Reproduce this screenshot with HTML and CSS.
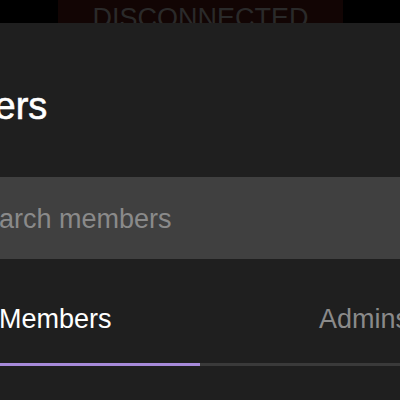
FILE: index.html
```html
<!DOCTYPE html>
<html lang="en">
<head>
<meta charset="utf-8">
<title>Members</title>
<link rel="stylesheet" href="styles.css">
</head>
<body>
  <div class="topbar">
    <div class="banner">DISCONNECTED</div>
  </div>
  <div class="sheet">
    <h1 class="title">Members</h1>
    <div class="search">
      <span class="placeholder">Search members</span>
    </div>
    <div class="tabs">
      <span class="tab tab-active">Members</span>
      <span class="tab">Admins</span>
    </div>
    <div class="track">
      <div class="indicator"></div>
    </div>
  </div>
</body>
</html>
```
FILE: styles.css
```css
html, body {
  margin: 0;
  padding: 0;
}
body {
  width: 400px;
  height: 400px;
  overflow: hidden;
  background: #000;
  font-family: "Liberation Sans", Arial, sans-serif;
}
.topbar {
  height: 23px;
  display: flex;
  justify-content: center;
  overflow: hidden;
  background: #000;
}
.banner {
  width: 285px;
  margin-left: 1px;
  background: #120504;
  color: #2a2a2a;
  font-size: 27px;
  line-height: 31px;
  padding-top: 3px;
  text-align: center;
  white-space: nowrap;
}
.sheet {
  height: 377px;
  background: #1f1f1f;
  overflow: hidden;
  display: flex;
  flex-direction: column;
}
.title {
  margin: 61px 0 0 -111px;
  font-size: 38px;
  line-height: 44px;
  font-weight: 400;
  color: #fff;
  -webkit-text-stroke: 0.6px #fff;
  white-space: nowrap;
}
.search {
  margin-top: 49px;
  height: 82px;
  padding-top: 3px;
  box-sizing: border-box;
  background: #404040;
  display: flex;
  align-items: center;
}
.placeholder {
  margin-left: -34px;
  font-size: 27px;
  line-height: 31px;
  color: #8a8a8a;
  white-space: nowrap;
}
.tabs {
  margin-top: 45px;
  display: flex;
  white-space: nowrap;
}
.tab {
  flex-shrink: 0;
  font-size: 27px;
  line-height: 31px;
  color: #8a8a8a;
}
.tab-active {
  color: #fff;
  margin-left: -1px;
  width: 320px;
}
.track {
  margin-top: 28px;
  height: 3px;
  background: #3a3a3a;
}
.indicator {
  width: 200px;
  height: 3px;
  background: #a68ad9;
}
```
